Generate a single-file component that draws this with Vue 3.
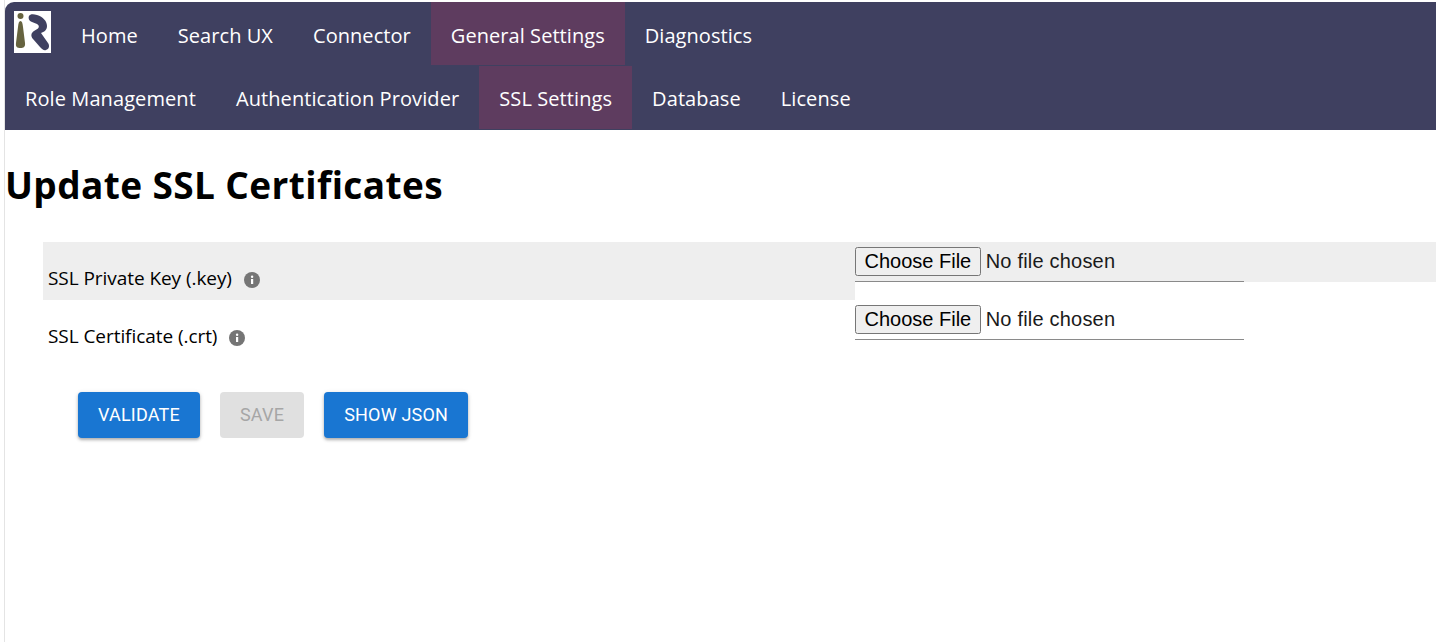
<script setup>
const topItems = [
  { label: 'Home' },
  { label: 'Search UX' },
  { label: 'Connector' },
  { label: 'General Settings', active: true },
  { label: 'Diagnostics' }
]
const subItems = [
  { label: 'Role Management' },
  { label: 'Authentication Provider' },
  { label: 'SSL Settings', active: true },
  { label: 'Database' },
  { label: 'License' }
]
const rows = [
  { label: 'SSL Private Key (.key)', shaded: true },
  { label: 'SSL Certificate (.crt)', shaded: false }
]
</script>

<template>
  <div class="page">
    <header class="nav">
      <div class="nav-row">
        <div class="logo">
          <svg width="37" height="42" viewBox="0 0 37 42">
            <rect width="37" height="42" fill="#fff" />
            <circle cx="6.5" cy="5" r="3" fill="#66633f" />
            <path d="M6.5 10 C8 10 8.6 12 9 16 L11 32 C11.5 36 9.5 37 6.5 37 C3 37 1.5 36 2 32 L4 16 C4.4 12 5 10 6.5 10Z" fill="#66633f" />
            <path d="M15 5 C16 3 19 2.5 23 4 C29 6 33 10 33 15 C33 19 30 21 27 22 L34 32 C36 35 35 38 32 39 C30 40 28 38 26 36 L19 28 C16.500 25 17 22 20 20 L24 17.500 C25.500 16 25 14 23 13 L18 11 C15 10 14 7 15 5Z" fill="#3f4060" />
          </svg>
        </div>
        <a v-for="item in topItems" :key="item.label" class="nav-item" :class="{ active: item.active }">{{ item.label }}</a>
      </div>
      <div class="nav-row sub">
        <a v-for="item in subItems" :key="item.label" class="nav-item" :class="{ active: item.active }">{{ item.label }}</a>
      </div>
    </header>

    <main class="content">
      <h1 class="title">Update SSL Certificates</h1>
      <form class="form" @submit.prevent>
        <div v-for="row in rows" :key="row.label" class="row" :class="{ shaded: row.shaded }">
          <div class="label-cell">
            <span>{{ row.label }}</span>
            <svg class="info" width="16" height="16" viewBox="0 0 16 16">
              <circle cx="8" cy="8" r="8" fill="#757575" />
              <rect x="7" y="7" width="2.200" height="5" fill="#fff" />
              <circle cx="8.100" cy="4.800" r="1.200" fill="#fff" />
            </svg>
          </div>
          <div class="input-cell">
            <div class="file-wrap">
              <input type="file" class="file" />
            </div>
          </div>
        </div>
        <div class="actions">
          <button type="button" class="btn">Validate</button>
          <button type="button" class="btn" disabled>Save</button>
          <button type="button" class="btn">Show JSON</button>
        </div>
      </form>
    </main>
  </div>
</template>

<style>
html, body { margin: 0; background: #fff; }
</style>

<style scoped>
.page {
  min-height: 642px;
  box-sizing: border-box;
  padding-top: 2px;
  background: #fff;
  border-left: 1px solid #e4e4e4;
  margin-left: 4px;
  overflow: hidden;
}
.nav {
  background: #3f4060;
  border-top-left-radius: 9px;
  height: 128px;
}
.nav-row {
  display: flex;
  height: 64px;
}
.logo {
  width: 56px;
  height: 64px;
  flex: none;
  box-sizing: border-box;
  padding: 9px 0 0 9px;
}
.logo svg { display: block; }
.nav-item {
  display: flex;
  align-items: center;
  box-sizing: border-box;
  height: 63px;
  padding: 3px 20px 0;
  color: #fff;
  font-family: "Open Sans", sans-serif;
  font-size: 20px;
  letter-spacing: 0.06px;
  white-space: nowrap;
}
.sub .nav-item { padding-top: 1px; letter-spacing: 0.09px; }
.nav-item.active { background: #5e3c5f; }
.content { font-family: "Open Sans", sans-serif; color: #000; }
.title {
  margin: 0;
  padding: 31px 0 0;
  font-size: 37px;
  line-height: 48px;
  font-weight: 700;
  letter-spacing: 0.4px;
}
.form { margin-top: 33px; padding-left: 38px; }
.row {
  display: flex;
  height: 58px;
}
.label-cell {
  width: 812px;
  flex: none;
  box-sizing: border-box;
  height: 58px;
  padding: 14px 0 0 5px;
  display: flex;
  align-items: center;
  gap: 12px;
  font-size: 19px;
  letter-spacing: -0.06px;
}
.info { margin-top: 4px; }
.row.shaded .label-cell { background: #eeeeee; }
.input-cell { flex: 1; height: 40px; }
.row.shaded .input-cell { background: #eeeeee; }
.file-wrap {
  width: 389px;
  height: 40px;
  box-sizing: border-box;
  border-bottom: 1px solid #8a8a8a;
}
.file {
  display: block;
  width: 389px;
  padding: 5px 0 0;
  font-family: "Liberation Sans", sans-serif;
  font-size: 20px;
  letter-spacing: 0.2px;
  color: #1a1a1a;
}
.file::file-selector-button {
  padding: 1px 7.5px;
  margin-right: 5px;
  letter-spacing: 0;
}
.actions {
  display: flex;
  gap: 20px;
  padding: 34px 0 0 35px;
}
.btn {
  height: 46px;
  padding: 0 20px 2px;
  border: 0;
  border-radius: 4px;
  background: #1976d2;
  color: #fff;
  font-family: Roboto, sans-serif;
  font-size: 18px;
  font-weight: 400;
  letter-spacing: 0.2px;
  text-transform: uppercase;
  box-shadow: 0 2px 3px rgba(0,0,0,.25), 0 1px 5px rgba(0,0,0,.12);
}
.btn:disabled {
  background: #e0e0e0;
  color: #a6a6a6;
  box-shadow: none;
}
</style>
